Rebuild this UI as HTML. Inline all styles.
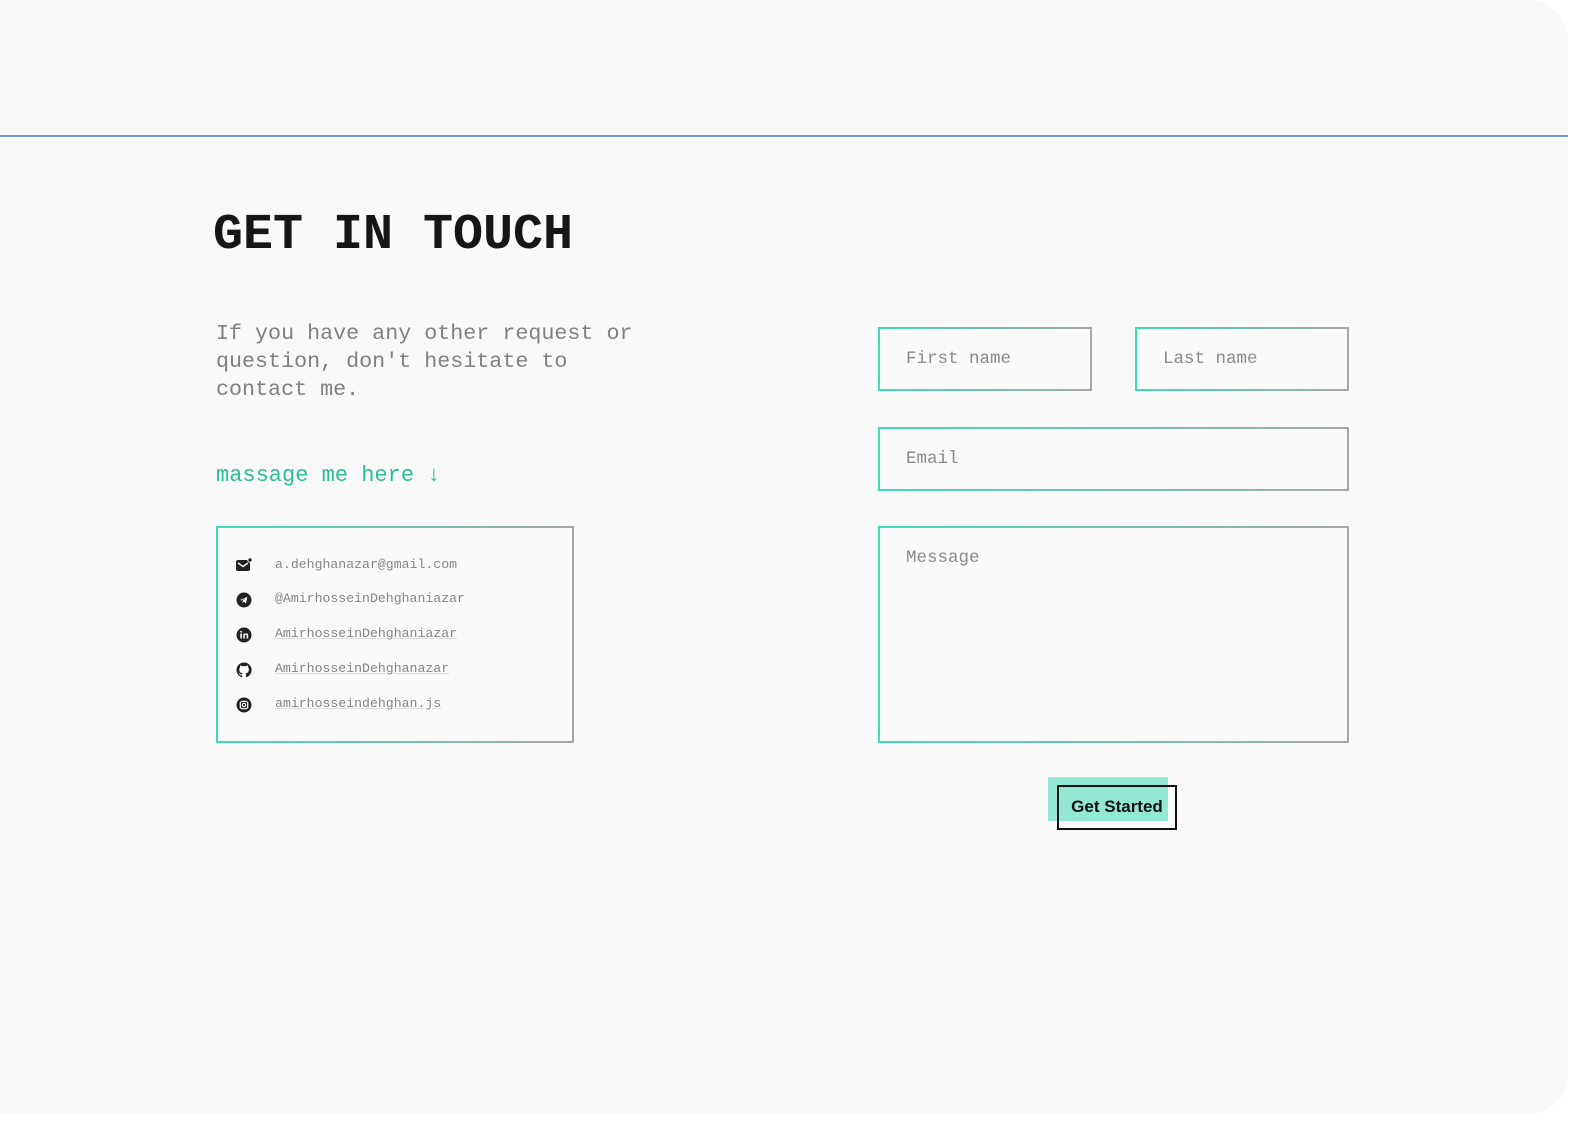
<!DOCTYPE html>
<html><head><meta charset="utf-8"><style>
html,body{margin:0;padding:0;background:#fff;width:1580px;height:1124px;overflow:hidden}
.page{position:absolute;left:0;top:0;width:1568px;height:1114px;background:#f9f9f9;border-radius:0 40px 40px 0;}
.line{position:absolute;left:0;top:135px;width:1568px;height:2px;background:#7a93d6}
.mono{font-family:"Liberation Mono","DejaVu Sans Mono",monospace}
.a{position:absolute}
h1{position:absolute;left:213px;top:203px;margin:0;font-size:50px;font-weight:bold;color:#161616;line-height:66px}
.p{left:216px;top:320px;font-size:21.7px;line-height:28px;color:#808080;width:440px}
.m{left:216px;top:461px;font-size:22px;color:#2bbf98;line-height:30px}
.box{position:absolute;box-sizing:border-box;border:2px solid;border-image:linear-gradient(to right,#3ddbb8,#a6a6a6) 1;background:#fafafa}
.ph{position:absolute;left:26px;font-size:17.5px;color:#8a8a8a;font-family:"Liberation Mono",monospace}
.ci{position:absolute;left:18px;width:16px;height:16px}
.ct{position:absolute;left:57px;font-size:13.2px;color:#858585;font-family:"Liberation Mono",monospace;line-height:16px}
.u{text-decoration:underline;text-decoration-color:#ddd}
</style></head><body>
<div class="page"></div>
<div class="line"></div>
<h1 class="mono">GET IN TOUCH</h1>
<div class="a mono p">If you have any other request or question, don't hesitate to contact me.</div>
<div class="a mono m">massage me here ↓</div>

<div class="box" style="left:216px;top:526px;width:358px;height:217px">
 <svg class="ci" style="top:29px" viewBox="0 0 16 16"><rect x="0" y="3" width="14" height="11" rx="2" fill="#222"/><path d="M2 6l5 3.5 5-3.5" stroke="#fafafa" stroke-width="1.4" fill="none"/><circle cx="14" cy="3" r="2.2" fill="#222" stroke="#fafafa" stroke-width="1"/></svg>
 <div class="ct" style="top:29px">a.dehghanazar@gmail.com</div>
 <svg class="ci" style="top:64px" viewBox="0 0 16 16"><circle cx="8" cy="8" r="7.5" fill="#222"/><path d="M3.8 8l7.5-3-1.3 6.5-2.2-1.8-1.2 1.2v-2l3-2.7-4 2.2z" fill="#fafafa"/></svg>
 <div class="ct" style="top:63px">@AmirhosseinDehghaniazar</div>
 <svg class="ci" style="top:99px" viewBox="0 0 16 16"><circle cx="8" cy="8" r="7.5" fill="#222"/><rect x="4.3" y="6.5" width="1.6" height="5" fill="#fafafa"/><circle cx="5.1" cy="4.8" r="0.9" fill="#fafafa"/><path d="M7.3 6.5h1.5v.8c.4-.6 1-.9 1.7-.9 1.2 0 1.7.8 1.7 2.1v3H10.6V8.8c0-.7-.2-1.1-.8-1.1s-.9.4-.9 1.1v2.7H7.3z" fill="#fafafa"/></svg>
 <div class="ct u" style="top:98px">AmirhosseinDehghaniazar</div>
 <svg class="ci" style="top:134px" viewBox="0 0 16 16"><path d="M8 .5a7.5 7.5 0 0 0-2.4 14.6c.4.1.5-.2.5-.4v-1.4c-2.1.5-2.5-.9-2.5-.9-.3-.9-.8-1.1-.8-1.1-.7-.5 0-.5 0-.5.8.1 1.200.8 1.200.8.7 1.200 1.8.8 2.200.6.1-.5.3-.8.5-1-1.700-.2-3.400-.8-3.400-3.700 0-.8.3-1.500.8-2-.1-.2-.3-1 .1-2 0 0 .6-.2 2 .8a7 7 0 0 1 3.800 0c1.400-1 2-.8 2-.8.4 1 .2 1.800.1 2 .5.5.8 1.200.8 2 0 2.900-1.800 3.500-3.400 3.700.3.2.5.7.5 1.400v2.100c0 .2.1.5.5.4A7.5 7.5 0 0 0 8 .5z" fill="#222"/></svg>
 <div class="ct u" style="top:133px">AmirhosseinDehghanazar</div>
 <svg class="ci" style="top:169px" viewBox="0 0 16 16"><circle cx="8" cy="8" r="7.5" fill="#222"/><rect x="4.3" y="4.3" width="7.4" height="7.4" rx="2" fill="none" stroke="#fafafa" stroke-width="1.2"/><circle cx="8" cy="8" r="1.7" fill="none" stroke="#fafafa" stroke-width="1.2"/></svg>
 <div class="ct u" style="top:168px">amirhosseindehghan.js</div>
</div>

<div class="box" style="left:878px;top:327px;width:214px;height:64px"><div class="ph" style="top:20px">First name</div></div>
<div class="box" style="left:1135px;top:327px;width:214px;height:64px"><div class="ph" style="top:20px">Last name</div></div>
<div class="box" style="left:878px;top:427px;width:471px;height:64px"><div class="ph" style="top:20px">Email</div></div>
<div class="box" style="left:878px;top:526px;width:471px;height:217px"><div class="ph" style="top:20px">Message</div></div>

<div class="a" style="left:1048px;top:777px;width:120px;height:44px;background:#93e8d3"></div>
<div class="a" style="left:1057px;top:785px;width:116px;height:41px;border:2px solid #111"></div>
<div class="a" style="left:1058px;top:796px;width:118px;text-align:center;font-family:'Liberation Sans',Arial,sans-serif;font-size:17px;font-weight:bold;color:#111;line-height:22px">Get Started</div>
</body></html>
